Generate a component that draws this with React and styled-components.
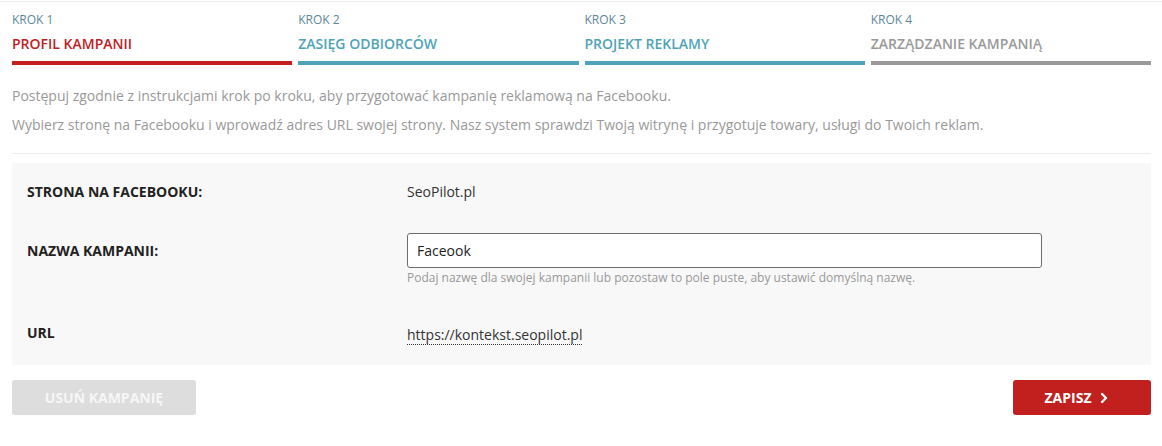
import React from "react";
import styled, { createGlobalStyle } from "styled-components";

const Global = createGlobalStyle`
  html, body { margin: 0; padding: 0; background: #fff; }
  body { font-family: "Open Sans", "Liberation Sans", sans-serif; color: #333; }
  * { box-sizing: border-box; }
`;

const Page = styled.div`
  border-top: 1px solid #eee;
  margin-top: 1px;
  padding: 0 11px 0 12px;
`;

const Steps = styled.div`
  display: grid;
  grid-template-columns: repeat(4, 1fr);
  column-gap: 6px;
  padding-top: 10px;
`;

const Step = styled.div`
  display: flex;
  flex-direction: column;
  border-bottom: 4px solid ${(p) => p.$color};
  padding-bottom: 7px;
`;

const StepNo = styled.div`
  font-size: 12px;
  line-height: 16px;
  color: #5e8799;
`;

const StepTitle = styled.div`
  margin-top: 6px;
  font-size: 14px;
  line-height: 20px;
  font-weight: 600;
  color: ${(p) => p.$color};
`;

const Intro = styled.div`
  padding-top: 21px;
  padding-bottom: 18px;
  border-bottom: 1px solid #eee;
`;

const Para = styled.p`
  margin: 0 0 9px;
  font-size: 14px;
  line-height: 20px;
  color: #999;
  &:last-child { margin-bottom: 0; }
`;

const Panel = styled.div`
  margin-top: 9px;
  background: #f8f8f8;
  padding: 0 15px;
`;

const Row = styled.div`
  display: grid;
  grid-template-columns: 380px 635px;
  align-items: start;
  padding: ${(p) => p.$pad};
`;

const Label = styled.div`
  font-size: 14px;
  font-weight: 700;
  color: #222;
  line-height: ${(p) => p.$lh || "20px"};
`;

const Value = styled.div`
  font-size: 14px;
  line-height: 20px;
  color: #333;
`;

const Link = styled.span`
  display: inline-block;
  margin-top: 2px;
  font-size: 14px;
  line-height: 18px;
  color: #333;
  border-bottom: 1px dotted #333;
`;

const Input = styled.input`
  display: block;
  width: 635px;
  height: 35px;
  border: 1px solid #6d6d6d;
  border-radius: 3px;
  background: #fff;
  padding: 0 9px;
  font-family: inherit;
  font-size: 14px;
  color: #222;
  outline: none;
`;

const Help = styled.div`
  margin-top: 2px;
  font-size: 12px;
  line-height: 16px;
  color: #999;
`;

const Actions = styled.div`
  display: flex;
  justify-content: space-between;
  margin-top: 15px;
`;

const Button = styled.button`
  height: 35px;
  width: ${(p) => p.$w};
  border: none;
  border-radius: 3px;
  background: ${(p) => p.$bg};
  color: ${(p) => p.$fg};
  font-family: inherit;
  font-size: 14px;
  font-weight: 700;
  display: flex;
  align-items: center;
  justify-content: center;
  gap: 8px;
  padding: 0 ${(p) => p.$pr || "0"} 0 0;
  cursor: pointer;
`;

const steps = [
  { no: "KROK 1", title: "PROFIL KAMPANII", color: "#c1201f" },
  { no: "KROK 2", title: "ZASIĘG ODBIORCÓW", color: "#4fa3b8" },
  { no: "KROK 3", title: "PROJEKT REKLAMY", color: "#4fa3b8" },
  { no: "KROK 4", title: "ZARZĄDZANIE KAMPANIĄ", color: "#999999" },
];

const Chevron = () => (
  <svg width="8" height="12" viewBox="0 0 8 12">
    <path d="M2 2 L6 6 L2 10" fill="none" stroke="#fff" strokeWidth="2.4" strokeLinecap="round" strokeLinejoin="round" />
  </svg>
);

export default function App() {
  return (
    <>
      <Global />
      <Page>
        <Steps>
          {steps.map((s) => (
            <Step key={s.no} $color={s.color}>
              <StepNo>{s.no}</StepNo>
              <StepTitle $color={s.color}>{s.title}</StepTitle>
            </Step>
          ))}
        </Steps>
        <Intro>
          <Para>Postępuj zgodnie z instrukcjami krok po kroku, aby przygotować kampanię reklamową na Facebooku.</Para>
          <Para>Wybierz stronę na Facebooku i wprowadź adres URL swojej strony. Nasz system sprawdzi Twoją witrynę i przygotuje towary, usługi do Twoich reklam.</Para>
        </Intro>
        <Panel>
          <Row $pad="19px 0">
            <Label>STRONA NA FACEBOOKU:</Label>
            <Value>SeoPilot.pl</Value>
          </Row>
          <Row $pad="12px 0 18px">
            <Label $lh="35px">NAZWA KAMPANII:</Label>
            <div>
              <Input defaultValue="Faceook" />
              <Help>Podaj nazwę dla swojej kampanii lub pozostaw to pole puste, aby ustawić domyślną nazwę.</Help>
            </div>
          </Row>
          <Row $pad="19px 0 20px">
            <Label>URL</Label>
            <div>
              <Link>https://kontekst.seopilot.pl</Link>
            </div>
          </Row>
        </Panel>
        <Actions>
          <Button $w="184px" $bg="#dddddd" $fg="#f6f6f6">USUŃ KAMPANIĘ</Button>
          <Button $w="138px" $bg="#c1201f" $fg="#ffffff" $pr="12px">
            ZAPISZ <Chevron />
          </Button>
        </Actions>
      </Page>
    </>
  );
}
